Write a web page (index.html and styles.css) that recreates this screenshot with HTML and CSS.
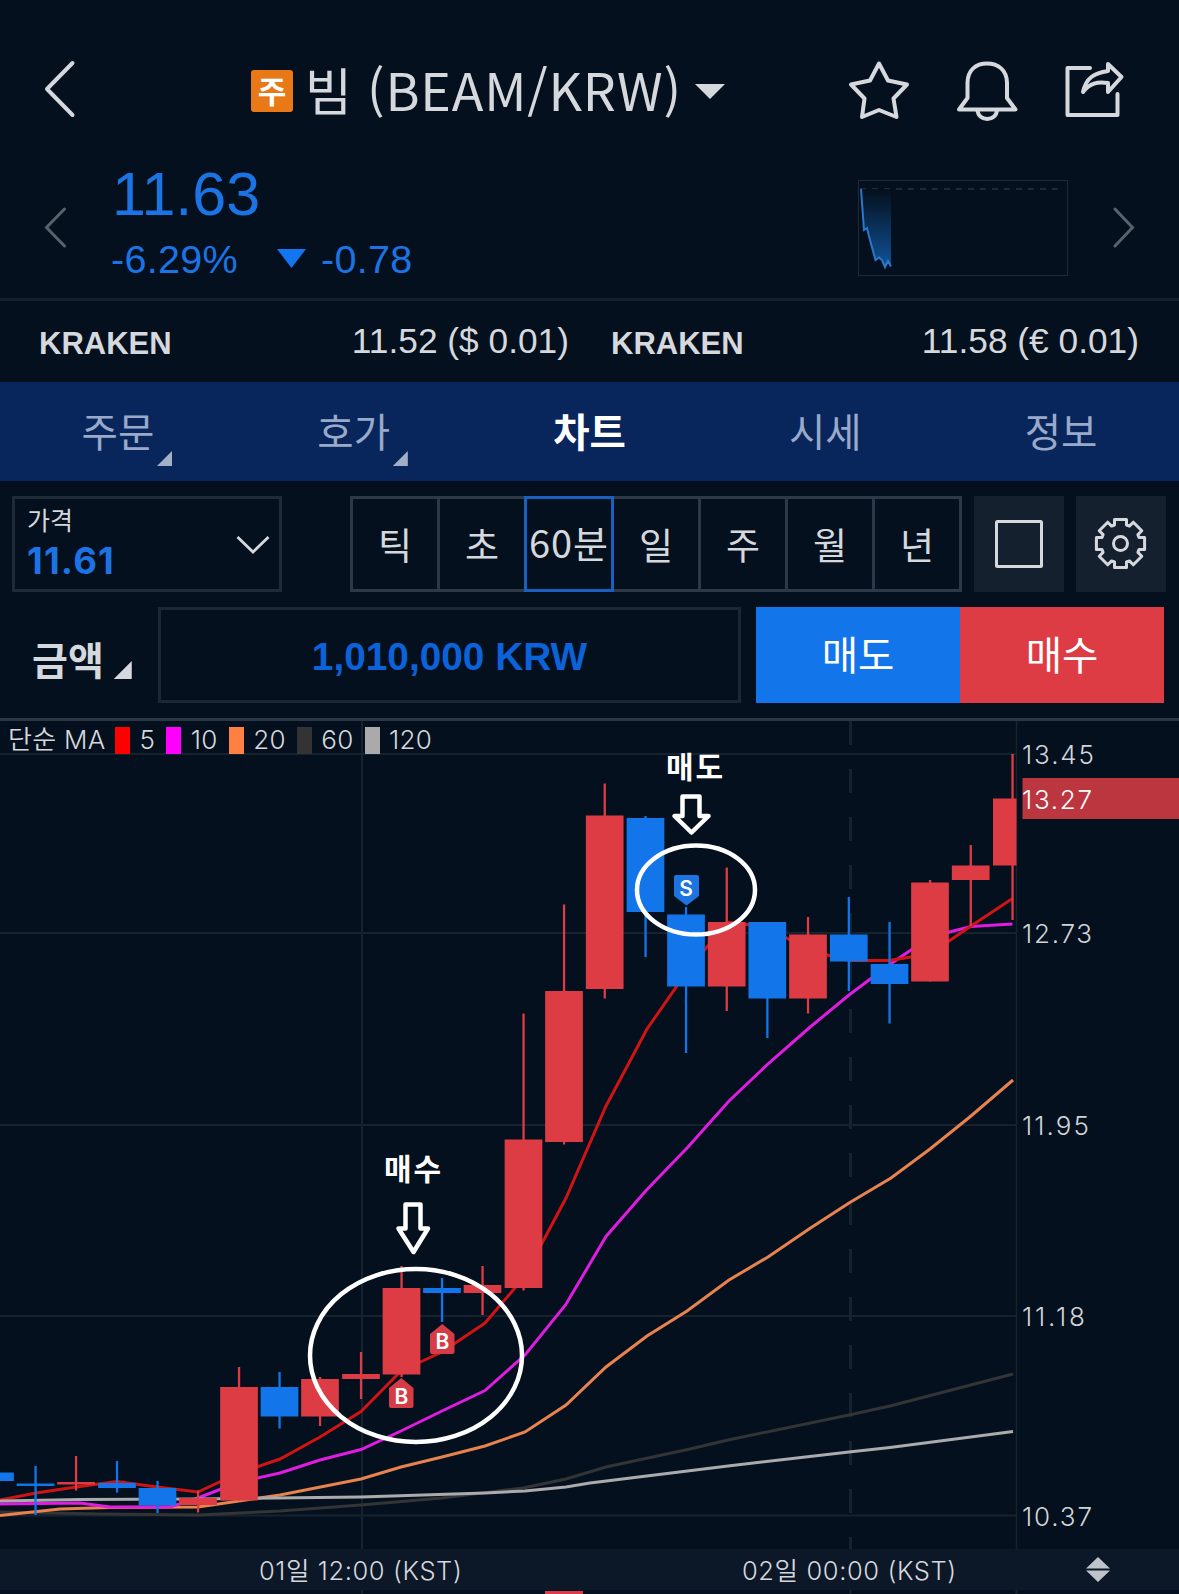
FILE: index.html
```
<!doctype html>
<html lang="ko">
  <head>
    <meta charset="UTF-8" />
    <meta name="viewport" content="width=device-width, initial-scale=1.0" />
    <title>빔 (BEAM/KRW)</title>
    <link rel="stylesheet" href="styles.css">
  </head>
  <body>
    <div class="app">
      <header class="header">
        <svg class="back" width="34" height="60" viewBox="0 0 34 60">
          <path d="M29.500 4 L4 30 L29.500 56" />
        </svg>
        <div class="title">
          <span class="badge">주</span>
          <span class="title-ko">빔</span>
          <span class="title-pair">(BEAM/KRW)</span>
          <svg class="caret" width="30" height="15" viewBox="0 0 30 15"><path d="M0 0H30L15 15Z" /></svg>
        </div>
        <div class="header-icons">
          <svg width="64" height="64" viewBox="0 0 64 64">
            <path d="M32 4.500 L41 21.500 L60 25.500 L46.500 39.500 L49.500 58 L32 51 L15 58 L17.500 39.500 L4 25.500 L23 21.500 Z" />
          </svg>
          <svg width="64" height="64" viewBox="0 0 64 64">
            <path d="M4 50.500 L12.500 39 V24 C12.500 11 21 4.500 32 4.500 S52 11 52 24 V39 L60.500 50.500 Z" />
            <path d="M22.500 51 C23 63 41.500 63 42 51" />
          </svg>
          <svg width="64" height="64" viewBox="0 0 64 64">
            <path d="M27 9 H4.500 V56 H54.500 V35" />
            <path d="M20 33 C23 19 31 14 45 12 V5 L58.500 18 L45 33 V24 C34 22.500 27 24 20 33 Z" />
          </svg>
        </div>
      </header>

      <section class="quote">
        <svg class="nav-arrow" width="24" height="44" viewBox="0 0 24 44"><path d="M21.500 3 L3.500 21.500 L21.500 40" /></svg>
        <div class="quote-main">
          <div class="price">11.63</div>
          <div class="change">
            <span class="change-rate">-6.29%</span>
            <svg width="29" height="19" viewBox="0 0 29 19"><path d="M0 0H29L14.500 19Z" /></svg>
            <span>-0.78</span>
          </div>
        </div>
        <svg class="mini-chart" width="210" height="96" viewBox="0 0 210 96">
          <defs>
            <linearGradient id="miniFill" x1="0" y1="0" x2="0" y2="1">
              <stop offset="0" stop-color="#04101d" />
              <stop offset="1" stop-color="#115298" />
            </linearGradient>
          </defs>
          <rect class="mini-frame" x="0.500" y="0.500" width="209" height="95" />
          <path class="mini-base" d="M2 9H202" />
          <path fill="url(#miniFill)" d="M3 9H33V86L30 81L27 87L24 80L20 77L17.500 80L12 60L9 48L6 50Z" />
          <path class="mini-line" d="M3 9L6 50L9 48L12 60L17.500 80L21 77.500L24 80L27 87L30 81L33 86.500" />
        </svg>
        <svg class="nav-arrow" width="24" height="44" viewBox="0 0 24 44"><path d="M3 3 L20.500 21.500 L3 40" /></svg>
      </section>

      <section class="exchanges">
        <div class="exchange"><b>KRAKEN</b><span>11.52 ($ 0.01)</span></div>
        <div class="exchange"><b>KRAKEN</b><span>11.58 (€ 0.01)</span></div>
      </section>

      <nav class="tabs">
        <a class="tab has-more">주문</a>
        <a class="tab has-more">호가</a>
        <a class="tab active">차트</a>
        <a class="tab">시세</a>
        <a class="tab">정보</a>
      </nav>

      <section class="toolbar">
        <div class="price-select">
          <div>
            <div class="select-label">가격</div>
            <div class="select-value">11.61</div>
          </div>
          <svg width="34" height="20" viewBox="0 0 34 20"><path d="M1.500 2 L17 17 L32.500 2" /></svg>
        </div>
        <div class="periods">
          <button>틱</button>
          <button>초</button>
          <button class="active">60분</button>
          <button>일</button>
          <button>주</button>
          <button>월</button>
          <button>년</button>
        </div>
        <button class="tool"><svg width="54" height="54" viewBox="0 0 54 54"><rect x="4.500" y="4.500" width="45" height="45" rx="1" /></svg></button>
        <button class="tool">
          <svg width="54" height="54" viewBox="0 0 54 54">
            <path id="gear" />
            <circle cx="26.500" cy="26.500" r="7" />
          </svg>
        </button>
      </section>

      <section class="order">
        <div class="order-type">금액<i></i></div>
        <div class="amount">1,010,000 KRW</div>
        <button class="sell">매도</button>
        <button class="buy">매수</button>
      </section>

      <section class="chart">
        <div class="legend">
          <span class="legend-name">단순 MA</span>
          <i class="ma5"></i><span>5</span>
          <i class="ma10"></i><span>10</span>
          <i class="ma20"></i><span>20</span>
          <i class="ma60"></i><span>60</span>
          <i class="ma120"></i><span>120</span>
        </div>
        <svg class="plot" width="1179" height="828" viewBox="0 721 1179 828">
          <g class="grid">
            <path d="M0 754H1017M0 933H1017M0 1125H1017M0 1316H1017M0 1515.500H1017" />
            <path d="M362 721V1549" />
            <path class="dashed" d="M850.500 721V1549" />
            <path class="edge" d="M1016.500 721V1549" />
          </g>
          <g id="averages"></g>
          <g id="candles"></g>

          <g class="marker down">
            <path d="M676 875H697Q699 875 699 877V896L686.500 905.500L674 896V877Q674 875 676 875Z" />
            <text x="686" y="896">S</text>
          </g>
          <g class="marker up">
            <path d="M442.300 1324L454.500 1334V1352Q454.500 1354 452.500 1354H432Q430 1354 430 1352V1334Z" />
            <text x="442.300" y="1349">B</text>
          </g>
          <g class="marker up">
            <path d="M401.300 1378L413.500 1388V1406Q413.500 1408 411.500 1408H391Q389 1408 389 1406V1388Z" />
            <text x="401.300" y="1403.500">B</text>
          </g>

          <g class="notes">
            <ellipse cx="696" cy="890" rx="59" ry="44.500" />
            <ellipse cx="416" cy="1355.500" rx="106" ry="86.500" />
            <path d="M682.500 796.500H699.500V816H708.500L691.500 832.500L674.500 816H682.500Z" />
            <path d="M405.500 1204.500H420.500V1228.500H428L413.500 1252L398.500 1228.500H405.500Z" />
            <text x="694.500" y="777.500" textLength="57">매도</text>
            <text x="412.500" y="1179.500" textLength="57">매수</text>
          </g>

          <rect class="current" x="1022.500" y="778" width="157" height="41" />
          <g class="axis">
            <text x="1022" y="764" textLength="72">13.45</text>
            <text class="now" x="1022" y="809" textLength="70">13.27</text>
            <text x="1022" y="943" textLength="70">12.73</text>
            <text x="1022" y="1135" textLength="67">11.95</text>
            <text x="1022" y="1326" textLength="63">11.18</text>
            <text x="1022" y="1525.500" textLength="70">10.37</text>
          </g>
        </svg>
      </section>

      <footer class="timeline">
        <span class="time">01일 12:00 (KST)</span>
        <span class="time">02일 00:00 (KST)</span>
        <svg width="24" height="25" viewBox="0 0 24 25"><path d="M0 11.500L12 0L24 11.500ZM0 13.500L12 25L24 13.500Z" /></svg>
      </footer>
      <svg class="volume" width="1179" height="4" viewBox="0 0 1179 4">
        <path class="volume-grid" d="M362 0V4M850.500 0V4M1016.500 0V4" />
        <rect x="545" y="1" width="38" height="3" />
      </svg>
    </div>
    <script src="chart.js"></script>
  </body>
</html>
```
FILE: styles.css
```
* {
  box-sizing: border-box;
}

body {
  margin: 0;
  background-color: #04101d;
  color: #d5d8dc;
  font-family: "Liberation Sans", "Noto Sans CJK KR", sans-serif;
}

button {
  border: none;
  margin: 0;
  padding: 0;
  font-family: "Noto Sans CJK KR", sans-serif;
}

svg {
  display: block;
  flex: none;
  fill: none;
}

.app {
  width: 1179px;
  height: 1594px;
  overflow: hidden;
  display: flex;
  flex-direction: column;
}

.header {
  height: 165px;
  padding: 59px 52px 0 43px;
  display: flex;
  align-items: flex-start;
}

.back {
  stroke: #d5d8dc;
  stroke-width: 4;
  stroke-linecap: round;
  stroke-linejoin: round;
}

.title {
  display: flex;
  align-items: center;
  height: 64px;
  margin-left: 174px;
  font-family: "Noto Sans CJK KR", sans-serif;
  font-size: 51px;
  font-weight: 400;
  line-height: 60px;
  white-space: nowrap;
}

.badge {
  width: 42px;
  height: 42px;
  border-radius: 3px;
  background-color: #e97817;
  color: #fff;
  font-size: 31px;
  font-weight: 700;
  line-height: 39px;
  text-align: center;
}

.title-ko {
  width: 47px;
  margin: -4px 0 0 12px;
}

.title-pair {
  width: 313px;
  margin: -4px 0 0 15px;
  font-size: 52px;
  letter-spacing: 0.8px;
}

.caret {
  fill: #d5d8dc;
  margin-left: 15px;
}

.header-icons {
  display: flex;
  gap: 44px;
  margin-left: auto;
  stroke: #d5d8dc;
  stroke-width: 4;
  stroke-linejoin: round;
  stroke-linecap: round;
}

.quote {
  height: 133px;
  padding: 0 43px;
  display: flex;
  align-items: flex-start;
}

.nav-arrow {
  margin-top: 41px;
  stroke: #59616c;
  stroke-width: 3;
  stroke-linecap: round;
}

.quote-main {
  flex: 1;
  margin-left: 44px;
  color: #1c74e4;
}

.price {
  height: 71px;
  padding-left: 1px;
  font-size: 61px;
  line-height: 59px;
}

.change {
  display: flex;
  align-items: center;
  font-size: 39.5px;
  line-height: 46px;
  letter-spacing: 0.3px;
}

.change svg {
  fill: #1375f0;
  margin: -1px 15px 0 0;
}

.change-rate {
  width: 166px;
}

.mini-chart {
  margin: 15px 44px 0 0;
}

.mini-frame {
  stroke: #1f2a36;
}

.mini-base {
  stroke: #1f2b37;
  stroke-width: 2;
  stroke-dasharray: 6 6;
}

.mini-line {
  stroke: #2878cc;
  stroke-width: 2;
}

.exchanges {
  height: 84px;
  border-top: 3px solid #14202d;
  padding: 0 39px;
  display: grid;
  grid-template-columns: 530px 528px;
  column-gap: 42px;
}

.exchange {
  display: flex;
  justify-content: space-between;
  align-items: center;
  font-size: 35.3px;
  white-space: nowrap;
}

.exchange span {
  margin-top: -1px;
}

.exchange b {
  font-size: 31px;
  margin-top: 4px;
}

.tabs {
  height: 99px;
  display: grid;
  grid-template-columns: repeat(5, 1fr);
  background-color: #08265b;
}

.tab {
  position: relative;
  text-align: center;
  font-family: "Noto Sans CJK KR", sans-serif;
  font-size: 39.5px;
  font-weight: 400;
  line-height: 95px;
  color: #99a9c9;
}

.tab.active {
  color: #fff;
  font-weight: 700;
}

.has-more::after {
  content: "";
  position: absolute;
  left: 157px;
  top: 69px;
  width: 15px;
  height: 15px;
  background-color: #a2afc7;
  clip-path: polygon(100% 0, 100% 100%, 0 100%);
}

.toolbar {
  display: flex;
  padding: 15px 12px 0;
  height: 126px;
}

.price-select {
  width: 270px;
  height: 96px;
  border: 3px solid #1e2a38;
  padding: 3px 9px 0 12px;
  display: flex;
  justify-content: space-between;
}

.price-select svg {
  margin-top: 33px;
  stroke: #d5d8dc;
  stroke-width: 2.8;
}

.select-label {
  font-family: "Noto Sans CJK KR", sans-serif;
  font-size: 25px;
  font-weight: 400;
  line-height: 34px;
}

.select-value {
  font-family: Inter, sans-serif;
  font-size: 36.5px;
  font-weight: 700;
  line-height: 51px;
  letter-spacing: 1.2px;
  color: #1c74e4;
}

.periods {
  width: 612px;
  height: 96px;
  margin-left: 68px;
  display: grid;
  grid-template-columns: 84px repeat(6, 1fr);
  border: 3px solid #2d3948;
}

.periods button {
  background: none;
  color: #d5d8dc;
  font-size: 37px;
  font-weight: 400;
  line-height: 84px;
  white-space: nowrap;
  border-left: 3px solid #2d3948;
}

.periods button:first-child {
  border-left: none;
}

.periods button.active {
  margin: -3px -3px -3px 0;
  border: 3px solid #1b60be;
  font-size: 38px;
  letter-spacing: 0.9px;
  line-height: 86px;
  display: flex;
  justify-content: center;
  position: relative;
}

.tool {
  width: 90px;
  height: 96px;
  margin-left: 12px;
  display: flex;
  align-items: center;
  justify-content: center;
  background-color: #15202e;
}

.tool svg {
  stroke: #d5d8dc;
  stroke-width: 3;
  stroke-linejoin: round;
}

.order {
  height: 114px;
  display: flex;
  border-bottom: 3px solid #2b3747;
}

.order-type {
  width: 158px;
  height: 96px;
  padding-left: 32px;
  display: flex;
  font-family: "Noto Sans CJK KR", sans-serif;
  font-size: 39px;
  font-weight: 600;
  line-height: 103px;
}

.order-type i {
  width: 18px;
  height: 18px;
  margin: 54px 0 0 10px;
  background-color: #d5d8dc;
  clip-path: polygon(100% 0, 100% 100%, 0 100%);
}

.amount {
  width: 583px;
  height: 96px;
  margin-right: 15px;
  border: 3px solid #1c2733;
  text-align: center;
  font-size: 38.8px;
  font-weight: 700;
  line-height: 93px;
  color: #0c62d8;
}

.sell,
.buy {
  width: 204px;
  height: 96px;
  color: #fff;
  font-size: 39.5px;
  font-weight: 400;
  line-height: 88px;
  padding-bottom: 4px;
}

.sell {
  background-color: #1375ea;
}

.buy {
  background-color: #dd3c45;
}

.chart {
  position: relative;
  height: 828px;
}

/* legend lies over the plot */
.legend {
  position: absolute;
  left: 8px;
  top: 6px;
  display: flex;
  height: 27px;
  font-family: Inter, "Noto Sans CJK KR", sans-serif;
  font-size: 26px;
  font-weight: 350;
  letter-spacing: 0.3px;
  line-height: 26px;
}

.legend i {
  width: 15px;
  height: 27px;
  margin: 0 9.5px 0 11px;
}

.legend-name {
  width: 96px;
  white-space: nowrap;
}

.ma5 {
  background-color: #ff0000;
  stroke: #d01414;
}

.ma10 {
  background-color: #ff00ff;
  stroke: #df1ce0;
}

.ma20 {
  background-color: #ff8040;
  stroke: #e8834f;
}

.ma60 {
  background-color: #333;
  stroke: #333436;
}

.ma120 {
  background-color: #aaa;
  stroke: #aaabad;
}

#averages {
  stroke-width: 3;
}

.grid {
  stroke: #17222f;
  stroke-width: 2;
}

.grid .dashed {
  stroke-width: 3;
  stroke-dasharray: 24 24;
}

.grid .edge {
  stroke-width: 1.5;
}

.candle-up {
  fill: #dd3c45;
}

.candle-down {
  fill: #1375ea;
}

.marker text {
  fill: #fff;
  font-family: Inter, sans-serif;
  font-size: 21px;
  font-weight: 600;
  text-anchor: middle;
}

.marker.up path {
  fill: #d63c46;
}

.marker.down path {
  fill: #1b74e0;
}

.notes {
  stroke: #fff;
  stroke-width: 4.5;
  stroke-linejoin: round;
}

.notes text {
  stroke: none;
  fill: #fff;
  font-family: "Noto Sans CJK KR", sans-serif;
  font-size: 30px;
  font-weight: 700;
  text-anchor: middle;
}

.current {
  fill: #bb363f;
}

.axis {
  fill: #d0d4d9;
  font-family: Inter, sans-serif;
  font-size: 26px;
  font-weight: 350;
}

.axis .now {
  fill: #fff;
}

.timeline {
  height: 41px;
  padding-left: 259px;
  display: flex;
  align-items: center;
  background-color: #0c1728;
  font-family: Inter, "Noto Sans CJK KR", sans-serif;
  font-size: 25.5px;
  font-weight: 350;
  letter-spacing: 0.6px;
}

.time {
  width: 483px;
  margin-top: -3px;
  white-space: nowrap;
}

.time + .time {
  width: 344px;
}

.timeline svg {
  fill: #bfc3ca;
}

.volume rect {
  fill: #dd3c45;
}

.volume-grid {
  stroke: #17222f;
  stroke-width: 2;
}
```
FILE: chart.js
```
const SVG_NS = "http://www.w3.org/2000/svg";
const CANDLE_WIDTH = 37.7;

// x, body top, body bottom, wick top, wick bottom, direction
const candles = [
  [-5, 1472.5, 1481, 1472.5, 1481, "down"],
  [35.5, 1483.5, 1486, 1466, 1515, "down"],
  [76, 1482, 1484.5, 1456, 1490.5, "up"],
  [117, 1483, 1488, 1461, 1492.5, "down"],
  [157.5, 1488, 1505.5, 1481, 1513, "down"],
  [198, 1498, 1505, 1490.5, 1512.5, "up"],
  [239, 1387, 1500.5, 1367, 1500.5, "up"],
  [279.5, 1387, 1416.5, 1372, 1428.5, "down"],
  [320, 1379, 1416.5, 1377, 1426, "up"],
  [361, 1374, 1379, 1352, 1399, "up"],
  [401.5, 1288, 1374.5, 1266, 1377, "up"],
  [442, 1288, 1293, 1278, 1322, "down"],
  [482.5, 1285, 1293, 1266, 1315, "up"],
  [523.5, 1139.5, 1288, 1013.5, 1290.5, "up"],
  [564, 991, 1142, 904.5, 1144.5, "up"],
  [604.7, 815.5, 989, 783.5, 998.5, "up"],
  [645.5, 818, 912, 816, 957, "down"],
  [686, 914.5, 986.5, 907, 1053, "down"],
  [726.7, 922, 986.5, 867.5, 1011, "up"],
  [767.3, 922, 998.5, 922, 1038, "down"],
  [808, 934.5, 998.5, 917, 1013.5, "up"],
  [848.8, 934.5, 961.5, 897, 991, "down"],
  [889.5, 964, 984, 922, 1023.5, "down"],
  [930, 882.5, 981.5, 880, 981.5, "up"],
  [970.7, 865.5, 880, 845, 926, "up"],
  [1012.5, 798.5, 865.5, 754, 920, "up"],
];

const averages = {
  ma60: "0,1512 100,1514 198,1515 280,1511 361,1505 442,1498 523,1488 566,1479 606,1467 690,1449 728,1440 849,1415 890,1406 1013,1374",
  ma20: "0,1515.5 60,1509 110,1507.5 198,1507 239,1501 280,1495 361,1479 401,1467 442,1457 485,1446 525,1432 566,1405 606,1367 647,1336 687,1311 729,1280 768,1257 809,1229 849,1203 891,1178 930,1149 971,1116 1013,1080",
  ma10: "0,1504 80,1503 110,1507 170,1507 198,1498 239,1482 280,1473 320,1460 361,1449.5 401,1431 442,1411 485,1390.5 525,1355 565.5,1305 606,1236.5 646.5,1190 688,1147 729,1101 769,1063 809,1028 849,995 889,965 930,937 971,926.5 1012.5,924",
  ma5: "0,1500 36,1493 76,1487 117,1481.5 157,1487 198,1492 239,1473 280,1459 320,1437 361,1411.5 401,1371 442,1352 485,1323 523.5,1278 566,1198 606,1106 647,1029 686,973 727,922 767,927 808,950 849,960.5 889,960.5 930,954 971,926 1012.5,898.5",
  ma120: "0,1501 80,1499.5 198,1499 361,1497 485,1493 525,1491 566,1487 590,1483 728,1466 849,1452 890,1447.5 1013,1431.5",
};

function draw(parent, tag, attrs) {
  const el = document.createElementNS(SVG_NS, tag);
  Object.entries(attrs).forEach(([key, value]) => el.setAttribute(key, value));
  parent.appendChild(el);
}

const averagesGroup = document.getElementById("averages");
Object.entries(averages).forEach(([name, points]) => {
  draw(averagesGroup, "polyline", { class: name, points });
});

const candlesGroup = document.getElementById("candles");
candles.forEach(([x, top, bottom, high, low, direction]) => {
  const left = x > 1000 ? 993 : x - CANDLE_WIDTH / 2;
  const width = x > 1000 ? 23.5 : CANDLE_WIDTH;
  const cls = "candle-" + direction;
  draw(candlesGroup, "rect", { class: cls, x: left, y: top, width, height: bottom - top });
  draw(candlesGroup, "rect", { class: cls, x: x - 1.1, y: high, width: 2.3, height: low - high });
});

// gear outline with eight teeth
const gear = [];
for (let i = 0; i < 8; i++) {
  [[-18, 19.5], [-14, 24.8], [14, 24.8], [18, 19.5]].forEach(([offset, radius]) => {
    const angle = ((i * 45 + offset) * Math.PI) / 180;
    gear.push((26.5 + radius * Math.sin(angle)).toFixed(1) + " " + (26.5 - radius * Math.cos(angle)).toFixed(1));
  });
}
document.getElementById("gear").setAttribute("d", "M" + gear.join("L") + "Z");
```
